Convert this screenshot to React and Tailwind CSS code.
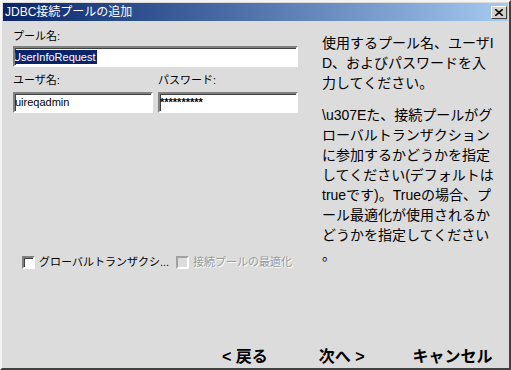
import React from 'react';

const font = "font-['Liberation_Sans','Noto_Sans_CJK_JP',sans-serif]";

const field = 'h-[21px] bg-white border-2 border-t-[#808080] border-l-[#808080] border-r-white border-b-white shadow-[inset_1px_1px_0_#404040] overflow-hidden flex items-center text-[11px] text-black';

const helpLines1 = ['使用するプール名、ユーザI', 'D、およびパスワードを入', '力してください。'];
const helpLines2 = [
  '\\u307Eた、接続プールがグ',
  'ローバルトランザクション',
  'に参加するかどうかを指定',
  'してください(デフォルトは',
  'trueです)。Trueの場合、プ',
  'ール最適化が使用されるか',
  'どうかを指定してください',
  '。',
];

const App = () => {
  return (
    <div className={`w-[511px] h-[370px] bg-[#dcdcdc] border-2 border-t-[#f4f4f4] border-l-[#f4f4f4] border-r-[#404040] border-b-[#404040] p-[1px] flex flex-col ${font}`}>
      <div className="h-[18px] shrink-0 flex items-center justify-between bg-gradient-to-r from-[#0a246a] to-[#a6caf0] pl-[2px] pr-[1px]">
        <span className="text-white text-[12px] leading-none">JDBC接続プールの追加</span>
        <div className="w-[16px] h-[13px] bg-[#d4d0c8] border border-t-white border-l-white border-r-[#404040] border-b-[#404040] flex items-center justify-center">
          <svg width="8" height="7" viewBox="0 0 8 7">
            <path d="M0 0 L8 7 M8 0 L0 7" stroke="#000" strokeWidth="1.6" />
          </svg>
        </div>
      </div>

      <div className="flex-1 flex pl-[10px]">
        <div className="w-[285px] flex flex-col">
          <div className="mt-[7px] h-[16px] leading-[16px] text-[11px] text-black">プール名:</div>
          <div className={`mt-[2px] ${field}`}>
            <span className="ml-[-3px] bg-[#0a246a] text-white leading-[14px] px-[1px]">UserInfoRequest</span>
          </div>
          <div className="mt-[5px] flex gap-[5px]">
            <div className="w-[140px] flex flex-col">
              <div className="h-[16px] leading-[16px] text-[11px] text-black">ユーザ名:</div>
              <div className={`mt-[4px] ${field}`}>
                <span>uireqadmin</span>
              </div>
            </div>
            <div className="w-[140px] flex flex-col">
              <div className="h-[16px] leading-[16px] text-[11px] text-black">パスワード:</div>
              <div className={`mt-[4px] ${field}`}>
                <span className="font-bold">**********</span>
              </div>
            </div>
          </div>
          <div className="mt-[141px] h-[16px] flex items-center pl-[9px] text-[11px]">
            <div className="shrink-0 w-[13px] h-[13px] bg-white border-2 border-t-[#808080] border-l-[#808080] border-r-white border-b-white shadow-[inset_1px_1px_0_#404040]" />
            <span className="ml-[4px] text-black whitespace-nowrap">グローバルトランザクシ...</span>
            <div className="shrink-0 ml-[7px] w-[13px] h-[13px] bg-[#dcdcdc] border-2 border-t-[#a0a0a0] border-l-[#a0a0a0] border-r-white border-b-white" />
            <span className="ml-[4px] text-[#9a9a9a] whitespace-nowrap [text-shadow:1px_1px_0_#ffffff]">接続プールの最適化</span>
          </div>
        </div>

        <div className="ml-[24px] pt-[12px] text-[14px] text-black">
          {helpLines1.map((l) => (
            <div key={l} className="h-[20px] leading-[20px] whitespace-nowrap">{l}</div>
          ))}
          <div className="h-[12px]" />
          {helpLines2.map((l) => (
            <div key={l} className="h-[20px] leading-[20px] whitespace-nowrap">{l}</div>
          ))}
        </div>
      </div>

      <div className="h-[20px] shrink-0 flex items-center text-[16px] font-bold text-black">
        <span className="ml-[219px] whitespace-nowrap">&lt; 戻る</span>
        <span className="ml-[51px] whitespace-nowrap">次へ &gt;</span>
        <span className="ml-[48px] whitespace-nowrap">キャンセル</span>
      </div>
    </div>
  );
};

export default App;
